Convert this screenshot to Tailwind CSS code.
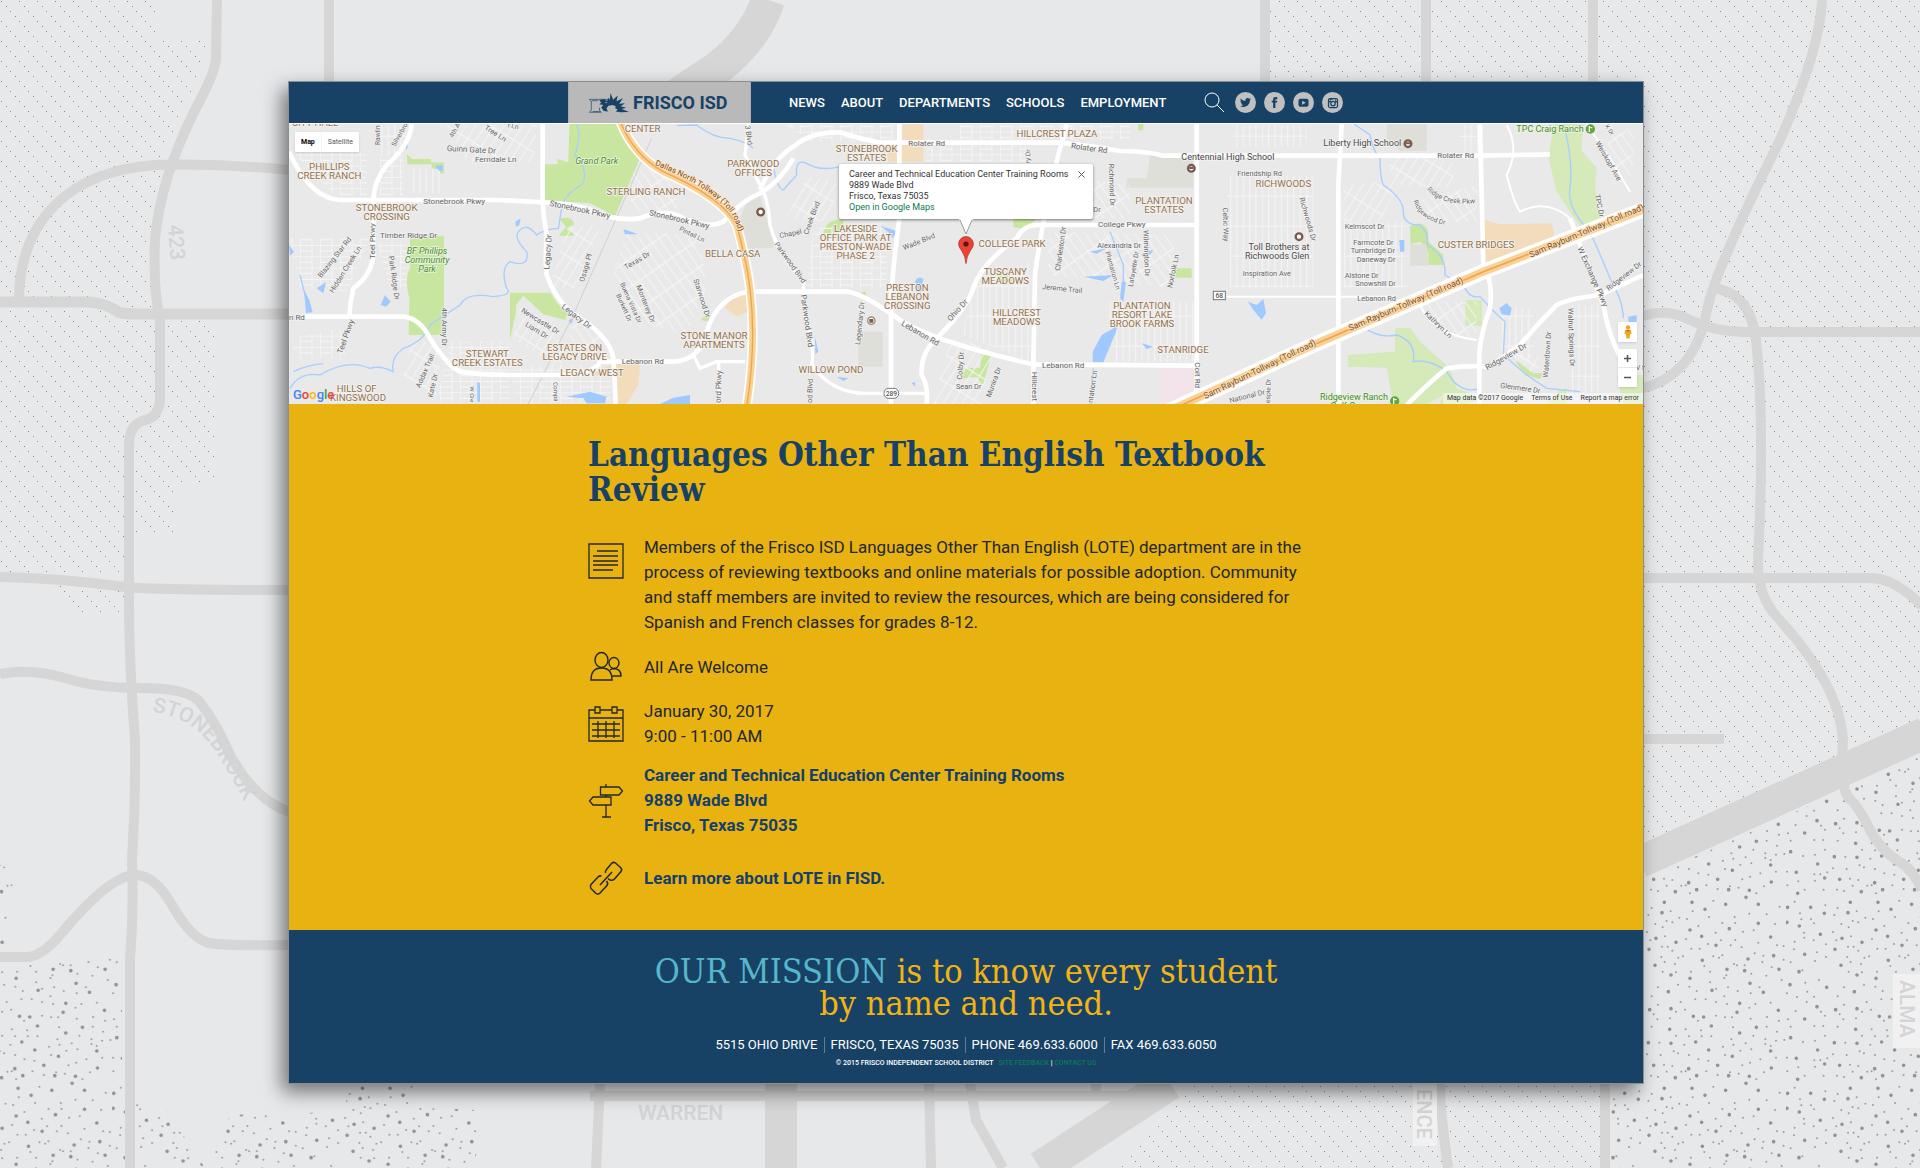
<!DOCTYPE html>
<html lang="en">
<head>
    <meta charset="UTF-8">
    <meta name="viewport" content="width=device-width, initial-scale=1.0">
    <title>Languages Other Than English Textbook Review | Frisco ISD</title>
    <script src="https://cdn.jsdelivr.net/npm/@tailwindcss/browser@4"></script>
</head>
<body class="relative min-h-screen overflow-x-hidden bg-[#e7e8ea] pt-[81px] pr-[276px] pb-[84px] pl-72 font-['Roboto',sans-serif]">

    <!-- Backdrop: faint road map -->
    <svg class="absolute inset-0 h-full w-full" viewBox="0 0 1920 1168" preserveAspectRatio="xMidYMid slice" aria-hidden="true">
        <defs>
            <pattern id="hatch" width="18" height="20" patternUnits="userSpaceOnUse">
                <path d="M1 1.500h1M6 6.500h1M10 11.500h1M15 16.500h1" stroke="#88888a" stroke-width="1" />
            </pattern>
            <pattern id="speckle" width="558" height="558" patternUnits="userSpaceOnUse" patternTransform="translate(1600 900) scale(.3333)">
                <path id="bigDots" fill="none" stroke="#929294" stroke-width="11" stroke-linecap="round" />
                <path id="smallDots" fill="none" stroke="#9c9c9e" stroke-width="6" stroke-linecap="round" />
            </pattern>
        </defs>
        <g fill="url(#hatch)">
            <path d="M0 0H155V38H210L200 75L165 150L152 230V310L0 300Z" />
            <path d="M0 305L110 310L160 320H215V485H175V535H125V572H0Z" />
            <path d="M57 584L125 588V612H70Z" />
            <path d="M1270 0H1422V82H1270ZM1430 0H1500L1498 18H1458V82H1430Z" />
            <path d="M1458 18H1500V0H1920V725L1643 848V82H1458Z" />
            <path d="M1195 1083H1601V1168H1120Z" />
        </g>
        <g fill="url(#speckle)">
            <path d="M0 865L14 870L6 950H0ZM0 966L122 958V1095L165 1108L205 1168H0Z" />
            <path d="M208 1168L230 1115L345 1112L348 1083H420L425 1108L480 1110L475 1168Z" />
            <path d="M1643 880L1920 756V1168H1611V1083H1643Z" />
        </g>
        <g fill="none" stroke="#d6d6d6" stroke-width="10">
            <path d="M217 0L216 60Q214 75 195 110Q160 180 155 240Q153 290 160 320V400Q158 418 145 420Q129 424 129 445V600Q129 660 135 740Q136 800 132 860Q134 910 130 960V1168" />
            <path d="M329 0V82M1265 0V82M1426 0V82M1593 0V82" />
            <path d="M0 302H90Q108 304 118 312Q122 314 140 314H289" stroke-width="11" />
            <path d="M289 170Q220 163 155 165Q90 170 55 205Q20 240 19 298" />
            <path d="M768 0Q755 40 715 70L670 100" stroke-width="34" />
            <path d="M0 577Q60 578 125 587Q160 590 289 590" />
            <path d="M0 674Q30 668 65 678Q95 688 140 688Q185 688 198 700Q215 720 230 755Q255 800 289 812" />
            <path d="M0 957H28Q42 956 60 935Q110 875 135 875Q155 875 172 905Q192 940 210 943Q225 946 289 945" />
            <path d="M590 1096H1140M600 1083L596 1168M929 1083L931 1168M970 1083L976 1120L1003 1168M1096 1083V1100" />
            <path d="M781 1083V1168" stroke-width="32" />
            <path d="M1170 1083L1040 1168" stroke-width="34" />
            <path d="M1440 1083Q1440 1110 1448 1168M1605 1083V1168" />
            <path d="M1822 0Q1820 50 1780 140Q1715 270 1707 310Q1695 375 1643 388" />
            <path d="M1643 316Q1668 308 1690 320Q1715 332 1745 332H1920" />
            <path d="M1710 288Q1750 290 1756 340Q1765 420 1758 560Q1757 595 1777 617Q1840 685 1843 740Q1840 785 1848 797Q1860 808 1870 830Q1882 852 1900 862Q1915 872 1922 890" />
            <path d="M1643 578H1870Q1895 578 1922 606M1643 739H1724" />
            <path d="M1640 862L1925 733" stroke-width="32" />
        </g>
        <path d="M1893 974H1922V1048H1893ZM1413 1080H1437V1146H1413Z" fill="#f1f1f2" />
        <g fill="#d3d4d6" font-size="20" font-weight="500">
            <path id="stonebrookCurve" d="M152 712Q192 716 216 752Q236 784 262 836" fill="none" />
            <text font-size="21"><textPath href="#stonebrookCurve">STONEBROOK</textPath></text>
            <text x="638" y="1120" font-size="21">WARREN</text>
            <text transform="translate(168 225) rotate(86)" font-size="21">423</text>
            <text transform="translate(1900 980) rotate(90)" font-size="21">ALMA</text>
            <text transform="translate(1417 1089) rotate(90)">ENCE</text>
        </g>
    </svg>

    <div class="relative border border-[#8b8f94] bg-[#e8b211] shadow-[-6px_8px_18px_rgba(0,0,0,0.5)]">

        <!-- Header -->
        <header class="flex h-[41px] items-stretch bg-[#184265] pl-[279px]">
            <a href="#" class="flex w-[183px] items-center gap-1 border-x border-[#a9abad] bg-[#b9b9b9] pl-[19px] text-lg font-bold text-[#184265]">
                <svg class="h-5 w-[41px]" viewBox="0 0 124 60" fill="#184265" aria-hidden="true">
                    <path d="M4 19H66M4 19L10 24V52L4 58H40L35 53V44M12 23H30M14 56H36" fill="none" stroke="#184265" stroke-width="2" />
                    <path d="M34 22L48 18L58 24L62 14L66 22L68 0L76 20L90 7L86 25L106 16L94 32L112 31L99 40L116 44L102 48L124 57L98 58L84 56L90 50L82 46L84 40L74 36L62 38L56 46L60 56L48 54L40 44L46 36L34 34L40 29Z" />
                    <path d="M70 38Q66 46 72 56Q62 56 58 46Q62 38 70 38ZM52 27L60 29L53 31Z" fill="#b9b9b9" />
                </svg>
                <span>FRISCO ISD</span>
            </a>
            <nav class="ml-[38px] flex items-center gap-4 text-[13px] font-medium text-white">
                <a href="#">NEWS</a>
                <a href="#">ABOUT</a>
                <a href="#">DEPARTMENTS</a>
                <a href="#">SCHOOLS</a>
                <a href="#">EMPLOYMENT</a>
            </nav>
            <div class="ml-[38px] flex items-center gap-2">
                <button type="button" aria-label="Search" class="mr-[2px]">
                    <svg class="size-[21px]" viewBox="0 0 21 21" fill="none" stroke="#fff" stroke-width="1"><circle cx="8" cy="8" r="7" /><path d="M13 13L20 20" /></svg>
                </button>
                <a href="#" aria-label="Twitter" class="flex size-[21px] items-center justify-center rounded-full bg-[#c0c0c0]">
                    <svg class="size-[11px]" viewBox="0 0 24 24" fill="#184265"><path d="M24 4.6c-.9.4-1.8.7-2.8.8 1-.6 1.8-1.6 2.2-2.7-1 .6-2 1-3.100 1.200A4.900 4.900 0 0 0 11.900 8.400C7.700 8.200 4 6.200 1.700 3.200c-1.300 2.200-.7 5.100 1.500 6.600-.8 0-1.600-.2-2.200-.6 0 2.300 1.600 4.400 3.900 4.900-.7.200-1.500.2-2.200.1.600 1.900 2.400 3.400 4.600 3.400A9.900 9.900 0 0 1 0 19.500a14 14 0 0 0 7.500 2.200c9.100 0 14.300-7.700 14-14.600.9-.7 1.800-1.600 2.500-2.500z" /></svg>
                </a>
                <a href="#" aria-label="Facebook" class="flex size-[21px] items-center justify-center rounded-full bg-[#c0c0c0]">
                    <svg class="size-[11px]" viewBox="0 0 24 24" fill="#184265"><path d="M9 8H6v4h3v12h5V12h3.600l.4-4h-4V6.300c0-.9.200-1.300 1.100-1.300H18V0h-3.800C10.600 0 9 1.600 9 4.600V8z" /></svg>
                </a>
                <a href="#" aria-label="YouTube" class="flex size-[21px] items-center justify-center rounded-full bg-[#c0c0c0]">
                    <svg class="size-[11px]" viewBox="0 0 24 24"><rect x="1" y="4" width="22" height="17" rx="4" fill="#184265" /><path d="M9 8L17 12.500L9 17Z" fill="#c0c0c0" /></svg>
                </a>
                <a href="#" aria-label="Instagram" class="flex size-[21px] items-center justify-center rounded-full bg-[#c0c0c0]">
                    <svg class="size-3" viewBox="0 0 24 24" fill="none" stroke="#184265" stroke-width="2.500"><rect x="3" y="3" width="18" height="18" rx="3" /><path d="M3 9H8M16 9H21M7 3V7M10 3V6" /><circle cx="12" cy="13" r="4.500" /><path d="M16 6H18" /></svg>
                </a>
            </div>
        </header>

        <!-- Map -->
        <section class="relative h-[281px] overflow-hidden border-t border-white bg-[#e9e9e9]" aria-label="Event location">
            <svg class="h-full w-full" viewBox="27 147 4062 840" preserveAspectRatio="xMidYMid slice">
                <defs>
                    <pattern id="blocks" width="60" height="34" patternUnits="userSpaceOnUse">
                        <path d="M0 1H60M0 18H36M1 0V34M36 1V34" fill="none" stroke="#f5f5f5" stroke-width="3" />
                    </pattern>
                    <pattern id="lanes" width="19" height="90" patternUnits="userSpaceOnUse">
                        <path d="M2 0V90M0 4H19" fill="none" stroke="#f5f5f5" stroke-width="3" />
                    </pattern>
                    <pattern id="slant" width="24" height="70" patternUnits="userSpaceOnUse" patternTransform="rotate(32)">
                        <path d="M2 0V70M0 4H24" fill="none" stroke="#f5f5f5" stroke-width="3" />
                    </pattern>
                    <pattern id="slantBack" width="24" height="70" patternUnits="userSpaceOnUse" patternTransform="rotate(-35)">
                        <path d="M2 0V70M0 4H24" fill="none" stroke="#f5f5f5" stroke-width="3" />
                    </pattern>
                </defs>

                <!-- parks, schools, retail -->
                <g fill="#c9e6a0">
                    <path d="M868 147H1018Q1040 210 1082 245L1005 424L930 385L793 376V268H835L830 252L865 262Z" />
                    <path d="M390 482H492V780H386L388 670Q372 610 390 580Z" />
                    <path d="M380 236L396 252H453V262H492V296H480V282H455V268H382Z" />
                    <path d="M690 653H812Q830 690 862 712L856 735L790 718L730 662L708 690V712L690 795Z" />
                    <path d="M838 432Q880 420 882 450L862 458Q885 468 880 482H836L858 456Z" />
                    <path d="M1262 735L1280 718L1300 724L1294 742Z" />
                    <path d="M1630 474Q1640 430 1690 434V455L1670 482ZM2200 432H2270L2230 462L2200 456ZM2048 880L2100 878L2104 836L2134 842L2108 930L2090 905L2050 910ZM2150 600H2190L2200 625H2160ZM2680 580H2735V608H2680ZM2574 147H2590V166H2574ZM1745 650H1758V662H1745Z" />
                    <path d="M3390 455Q3430 430 3445 470V500L3490 540V570H3445V535L3420 500L3392 508Z" />
                    <path d="M3700 850L3760 895H3790L3780 912L3735 900Z" />
                </g>
                <g fill="#d5e9b9">
                    <path d="M3820 147H3910L3904 226L3950 280L3945 340L3966 440L3910 465L3870 410L3830 350L3806 250Z" />
                    <path d="M3204 840L3345 830V760L3390 758L3420 800L3510 880L3530 940L3440 987H3340L3320 878L3204 875Z" />
                    <path d="M3556 676H3606V752H3556ZM3840 945L3860 940V987H3800ZM4010 900H4089V987H4030ZM3500 930L3560 950L3600 975L3560 987H3480Z" />
                </g>
                <g fill="#f2dcbc">
                    <path d="M1868 147H1930V260H1824L1820 200L1866 195ZM1335 700Q1350 660 1405 655V710L1370 724ZM935 900Q1000 850 1080 870L1075 930L1040 987H1010L1000 905Z" />
                    <path d="M3610 434L3660 448L3815 445L3822 470V500L3610 580Z" />
                </g>
                <path d="M1380 440Q1390 370 1440 360L1450 400L1480 500V520H1400ZM1735 770H1808V875H1735ZM2610 240H2740V338H2540V310H2600ZM3320 147H3440V228H3360L3320 190ZM3390 508H3440L3445 572H3390Z" fill="#dfdfda" />
                <path d="M2640 880H2750V950L2700 987H2640Z" fill="#f3e3ea" />

                <!-- minor streets -->
                <path d="M40 230H260V360H160ZM300 250H370V360H300ZM30 490H270L200 650L60 640ZM290 500H380V640H330ZM40 790L180 760L200 850H40ZM510 800H690V980H470ZM700 870H990V985H700ZM1510 147H1840V200H1600ZM1600 460L1820 440V640H1580ZM1940 210H2240V260H1940ZM2040 150H2550V195H2040Z" fill="url(#blocks)" />
                <path d="M300 150H380V245H300ZM385 280H490V355H385ZM2070 640L2250 560V860L2050 780ZM2480 680H2740V860H2500ZM2860 150H3080V215H2860ZM2840 300H3100V640H2850ZM3190 440H3380V640H3190ZM3540 150H3600V230H3540ZM3660 700H3760V860H3660ZM3870 690H3960V950H3870Z" fill="url(#lanes)" />
                <path d="M500 150H770L760 260H560ZM720 700L830 740L850 890L700 790ZM400 780L480 820L470 960L370 900ZM860 460L960 450L900 640H810ZM1580 300L1680 330L1640 440L1520 430ZM2010 790L2140 820L2100 987H1960ZM3330 240L3520 260V340L3330 330ZM3190 330L3360 320L3300 440H3190ZM3680 820L3800 850L3760 900Z" fill="url(#slant)" />
                <path d="M1040 470L1260 480L1280 640L1220 780L1080 740L1000 600ZM880 720L980 800L960 880L870 800ZM1060 290L1140 260L1200 400L1050 410ZM2300 300L2550 330V430H2320ZM2310 470L2680 480V640L2300 600ZM3400 380L3590 330V440L3460 440ZM3430 680L3590 680V790L3480 770ZM3980 190L4060 160V300L4010 300Z" fill="url(#slantBack)" />

                <!-- water -->
                <g fill="none" stroke="#a8ceff" stroke-width="4">
                    <path d="M890 147Q905 180 885 240Q930 290 905 330Q850 360 845 400L835 460Q800 460 770 480Q740 440 715 470Q700 490 740 530Q750 580 690 560Q660 580 680 640Q700 660 640 665Q560 650 540 690Q480 730 450 750Q430 800 370 820Q330 850 340 890Q300 870 270 880Q200 850 120 900Q60 890 30 940" />
                    <path d="M1190 152L1250 150Q1300 190 1350 190Q1400 200 1420 220M1480 270Q1490 340 1510 345L1550 300Q1545 250 1580 265Q1620 290 1680 275M40 890Q80 870 130 866M60 600L80 680" />
                    <path d="M3222 147L3270 180Q3280 230 3300 250Q3300 310 3310 330Q3370 370 3370 410Q3370 450 3420 450Q3450 480 3440 510Q3500 540 3495 600Q3530 620 3555 640Q3570 670 3600 665Q3640 710 3675 740L3670 840L3740 900L3800 940L3900 950" />
                    <path d="M3850 147Q3880 250 3870 340Q3860 400 3930 470Q3970 560 3990 610Q4030 680 4030 730M3255 760Q3300 790 3350 780Q3410 800 3400 860Q3450 850 3500 890Q3540 960 3600 940M2490 470L2530 570V640M2440 880L2430 987" />
                </g>
                <g fill="#a0c9ff">
                    <path d="M72 645L88 675L98 712L78 714ZM27 510L42 530L30 542ZM110 640L138 622L130 655ZM302 690L315 660L332 680L318 695ZM372 205L384 210L380 226ZM464 272L488 270V288H478ZM706 440L722 430L718 450L708 455ZM1030 462L1075 478H1035ZM866 736L880 730L874 748ZM592 920L600 925V980H592ZM860 965L930 950L980 965L975 985H920L910 970ZM1180 968L1230 960V987H1140Z" />
                    <path d="M1800 452L1850 468L1838 490L1824 470ZM1905 620Q1915 600 1930 612L1925 650H1910ZM1605 785L1615 830L1606 838ZM1670 905L1705 910L1690 918ZM2430 530L2480 520L2450 536ZM2410 605L2500 600L2470 618ZM2525 620H2538L2530 680L2520 670ZM2465 780L2500 760L2520 720L2508 770L2470 862H2438V830ZM2585 805L2620 815L2600 822ZM2600 530L2620 525L2610 540ZM1895 925L1905 920L1906 935Z" />
                    <path d="M2904 680L2930 690L2950 672L2958 715L2945 734L2920 705ZM3358 495H3373V530H3360ZM3658 700L3680 684L3695 700L3690 722L3665 718ZM4045 725L4070 720V745H4045Z" />
                </g>
                <path d="M1115 190L880 720L745 987" fill="none" stroke="#cfcfcf" stroke-width="3" />

                <!-- arterials -->
                <g fill="none" stroke="#fff" stroke-width="14">
                    <path d="M27 230Q90 370 180 375H660L790 382Q880 385 950 410Q1010 440 1080 430Q1150 400 1200 425Q1280 465 1330 440Q1380 380 1440 355Q1500 320 1540 250" />
                    <path d="M1405 147L1395 240L1440 330Q1465 370 1470 450Q1490 530 1570 620L1575 720Q1605 800 1595 870Q1660 960 1770 955H1940" stroke-width="10" />
                    <path d="M1440 345Q1480 250 1540 215Q1590 170 1680 172Q1750 195 1800 203H2340Q2450 215 2520 228Q2600 228 2650 242H3600L3810 238" />
                    <path d="M395 147Q390 210 320 270Q280 320 280 380V540Q275 600 220 640Q210 680 208 725" />
                    <path d="M65 725H370Q420 730 450 790Q500 870 540 890Q600 900 700 900H860Q950 890 960 860H1180Q1260 855 1280 770Q1310 670 1400 650H1700Q1750 655 1860 735Q1960 800 2260 868L2750 872" />
                    <path d="M788 147V380Q790 430 800 480Q795 560 800 600Q820 660 870 710Q990 780 1000 850Q1005 920 1007 987" />
                    <path d="M1240 840L1260 880L1310 860H1395M1316 862V987" stroke-width="10" />
                    <path d="M1858 147V430Q1835 600 1833 700V987M2360 147L2335 240Q2285 440 2265 600L2260 870V987M2750 147V987" />
                    <path d="M2750 450H2270Q2230 450 2210 490Q2100 570 2080 640Q2060 700 1980 780Q1920 830 1925 900Q1945 930 1940 987" />
                    <path d="M3185 147L3175 330V987M3600 147L3610 570Q3640 620 3630 700Q3600 780 3598 840V987" />
                    <path d="M4089 600L3960 660Q3870 670 3830 690Q3770 750 3720 810L3630 875Q3560 870 3500 880Q3450 920 3380 990M3870 430L3920 560L3970 690Q3990 800 4030 860" />
                    <path d="M3680 150Q3720 220 3680 300Q3700 380 3720 410Q3800 370 3870 430M3420 690Q3460 780 3590 795M2840 665H3350M3920 147L3990 250L4050 350" stroke-width="6" />
                </g>

                <!-- toll roads -->
                <g fill="none">
                    <path d="M1020 137Q1060 240 1150 290Q1330 370 1370 450Q1400 560 1410 640Q1430 800 1400 997" stroke="#fff" stroke-width="30" />
                    <path d="M1020 137Q1060 240 1150 290Q1330 370 1370 450Q1400 560 1410 640Q1430 800 1400 997" stroke="#fbd193" stroke-width="20" />
                    <path d="M1020 137Q1060 240 1150 290Q1330 370 1370 450Q1400 560 1410 640Q1430 800 1400 997" stroke="#eba552" stroke-width="4" />
                    <path d="M2640 1020L3100 810L3610 590L4100 400" stroke="#fff" stroke-width="46" />
                    <path d="M2640 1020L3100 810L3610 590L4100 400" stroke="#fbd193" stroke-width="24" />
                    <path d="M2640 1020L3100 810L3610 590L4100 400" stroke="#eba552" stroke-width="5" />
                </g>

                <!-- street names -->
                <g fill="#666" stroke="#f4f4f4" stroke-width="4" paint-order="stroke" font-size="24">
                    <text x="500" y="228" transform="rotate(3 500 228)">Guinn Gate Dr</text>
                    <text x="585" y="261">Ferndale Ln</text>
                    <text x="430" y="388">Stonebrook Pkwy</text>
                    <text x="808" y="392" transform="rotate(12 808 392)">Stonebrook Pkwy</text>
                    <text x="1106" y="420" transform="rotate(13 1106 420)">Stonebrook Pkwy</text>
                    <text x="300" y="489">Timber Ridge Dr</text>
                    <text x="27" y="736">n Rd</text>
                    <text x="1025" y="867">Lebanon Rd</text>
                    <text transform="translate(285 552) rotate(-90)">Teel Pkwy</text>
                    <text transform="translate(186 838) rotate(-70)">Teel Pkwy</text>
                    <text transform="translate(124 610) rotate(-52)" font-size="22">Blazing Star Rd</text>
                    <text transform="translate(160 655) rotate(-58)" font-size="22">Hidden Creek Ln</text>
                    <text transform="translate(326 544) rotate(82)" font-size="22">Park Ridge Dr</text>
                    <text transform="translate(486 698) rotate(90)" font-size="22">4th Army Dr</text>
                    <text transform="translate(300 210) rotate(-90)" font-size="20">Rawlin</text>
                    <text transform="translate(345 216) rotate(-60)" font-size="20">Silverbro</text>
                    <text transform="translate(518 190) rotate(-60)" font-size="20">4th A</text>
                    <text transform="translate(612 162) rotate(32)" font-size="22">Tree Ln</text>
                    <text transform="translate(682 156) rotate(12)" font-size="20">t Ln</text>
                    <text transform="translate(808 584) rotate(-86)">Legacy Dr</text>
                    <text transform="translate(843 698) rotate(38)">Legacy Dr</text>
                    <text transform="translate(912 622) rotate(-74)" font-size="22">Osage Pl</text>
                    <text transform="translate(722 710) rotate(32)" font-size="22">Newcastle Dr</text>
                    <text transform="translate(734 752) rotate(32)" font-size="22">Liam Dr</text>
                    <text transform="translate(1038 584) rotate(-30)" font-size="22">Texas Dr</text>
                    <text transform="translate(1196 466) rotate(26)" font-size="20">Pintail Ln</text>
                    <text transform="translate(1240 614) rotate(72)" font-size="22">Starwood Dr</text>
                    <text transform="translate(1068 634) rotate(68)" font-size="22">Monterey Dr</text>
                    <text transform="translate(1020 626) rotate(66)" font-size="20">Buena Vista Dr</text>
                    <text transform="translate(1008 660) rotate(66)" font-size="20">Burkett Dr</text>
                    <text transform="translate(420 940) rotate(-66)" font-size="22">Addax Trail</text>
                    <text transform="translate(458 968) rotate(-78)" font-size="22">Kate Dr</text>
                    <text transform="translate(570 934) rotate(90)" font-size="18">W Cre</text>
                    <text transform="translate(820 922) rotate(88)" font-size="18">Compa</text>
                    <text transform="translate(1322 984) rotate(-88)">ord Pkwy</text>
                    <text transform="translate(1395 152) rotate(82)" font-size="22">3 Blvd</text>
                    <text transform="translate(1500 490) rotate(-12)" font-size="22">Chapel</text>
                    <text transform="translate(1584 480) rotate(-70)" font-size="22">Creek Blvd</text>
                    <text transform="translate(1482 508) rotate(54)" font-size="22">Parkwood Blvd</text>
                    <text transform="translate(1562 660) rotate(82)">Parkwood Blvd</text>
                    <text transform="translate(1596 984) rotate(-88)" font-size="22">od Blvd</text>
                    <text transform="translate(1740 810) rotate(-84)" font-size="22">Legendary Dr</text>
                    <text transform="translate(1872 526) rotate(-22)" font-size="22">Wade Blvd</text>
                    <text transform="translate(1862 750) rotate(30)">Lebanon Rd</text>
                    <text transform="translate(2012 740) rotate(-48)">Ohio Dr</text>
                    <text x="1885" y="212">Rolater Rd</text>
                    <text x="2372" y="220" transform="rotate(8 2372 220)">Rolater Rd</text>
                    <text x="2454" y="456">College Pkwy</text>
                    <text x="2440" y="412" font-size="22">Dr</text>
                    <text transform="translate(2250 265) rotate(-88)" font-size="20">ry Dr</text>
                    <text transform="translate(2486 266) rotate(88)" font-size="22">Richmond Dr</text>
                    <text transform="translate(2340 588) rotate(-82)" font-size="22">Charleston Dr</text>
                    <text x="2452" y="518" font-size="22">Alexandria Dr</text>
                    <text transform="translate(2476 532) rotate(74)" font-size="20">Plantation Ln</text>
                    <text transform="translate(2558 636) rotate(-80)" font-size="20">Lafayette Dr</text>
                    <text transform="translate(2590 466) rotate(88)" font-size="22">Wilmington Dr</text>
                    <text transform="translate(2676 640) rotate(-78)" font-size="22">Norfolk Ln</text>
                    <text x="2286" y="642" transform="rotate(6 2286 642)" font-size="22">Jereme Trail</text>
                    <text x="2286" y="879">Lebanon Rd</text>
                    <text x="2028" y="943" font-size="22">Sean Dr</text>
                    <text transform="translate(2046 914) rotate(-86)" font-size="22">Colby Dr</text>
                    <text transform="translate(2132 968) rotate(-70)" font-size="22">Munira Dr</text>
                    <text transform="translate(2256 890) rotate(90)">Hillcrest</text>
                    <text transform="translate(2438 984) rotate(-82)" font-size="22">ntation Ln</text>
                    <text transform="translate(2744 862) rotate(90)">Coit Rd</text>
                    <text x="2872" y="303" font-size="22">Friendship Rd</text>
                    <text transform="translate(2828 398) rotate(88)" font-size="22">Celtic Way</text>
                    <text transform="translate(3058 370) rotate(74)" font-size="22">Richwoods Dr</text>
                    <text x="2888" y="602" font-size="22">Inspiration Ave</text>
                    <text x="3472" y="250">Rolater Rd</text>
                    <text x="3194" y="462" font-size="22">Kelmscot Dr</text>
                    <text x="3220" y="510" font-size="22">Farmcote Dr</text>
                    <text x="3212" y="535" font-size="22">Turnbridge Dr</text>
                    <text x="3230" y="560" font-size="22">Daneway Dr</text>
                    <text x="3194" y="609" font-size="22">Alstone Dr</text>
                    <text x="3226" y="633" font-size="22">Snowshill Dr</text>
                    <text x="3232" y="679" font-size="22">Lebanon Rd</text>
                    <path id="ridgeCreek" d="M3440 344Q3490 396 3590 384" fill="none" stroke="none" />
                    <text font-size="21"><textPath href="#ridgeCreek">Ridge Creek Pkwy</textPath></text>
                    <path id="ridgewood" d="M3400 378Q3420 440 3510 452" fill="none" stroke="none" />
                    <text font-size="20"><textPath href="#ridgewood">Ridgewood Dr</textPath></text>
                    <text transform="translate(3432 718) rotate(44)" font-size="22">Kathryn Ln</text>
                    <text transform="translate(3622 886) rotate(-30)">Ridgeview Dr</text>
                    <text transform="translate(3986 648) rotate(-38)" font-size="22">Ridgeview Dr</text>
                    <text transform="translate(3892 520) rotate(66)">W Exchange Pkwy</text>
                    <text transform="translate(3946 204) rotate(60)" font-size="22">Weiskopf Ave</text>
                    <text transform="translate(3944 360) rotate(78)" font-size="22">TPC Dr</text>
                    <text transform="translate(3974 154) rotate(55)" font-size="18">K Dr</text>
                    <text transform="translate(3804 908) rotate(-86)" font-size="22">Waterdown Dr</text>
                    <text transform="translate(3864 700) rotate(88)" font-size="22">Walnut Springs Dr</text>
                    <text transform="translate(3660 938) rotate(8)" font-size="22">Glenmere Dr</text>
                    <text transform="translate(2850 984) rotate(-14)" font-size="22">National Dr</text>
                    <text transform="translate(2970 984) rotate(-88)" font-size="20">espie Dr</text>
                    <text x="4068" y="884" font-size="20">V I</text>
                </g>
                <g fill="#7b4a1c" stroke="#fbe3bf" stroke-width="5" paint-order="stroke" font-size="24">
                    <path id="dntName" d="M1124 270Q1330 352 1366 440Q1378 470 1386 520" fill="none" stroke="none" />
                    <text><textPath href="#dntName">Dallas North Tollway (Toll road)</textPath></text>
                    <text transform="translate(2776 972) rotate(-26)" font-size="26">Sam Rayburn Tollway (Toll road)</text>
                    <text transform="translate(3210 768) rotate(-23)" font-size="26">Sam Rayburn Tollway (Toll road)</text>
                    <text transform="translate(3752 548) rotate(-23)" font-size="26">Sam Rayburn Tollway (Toll road)</text>
                </g>

                <!-- neighbourhoods -->
                <g fill="#93714d" stroke="#f4f2ef" stroke-width="5" paint-order="stroke" font-size="29" text-anchor="middle">
                    <text x="105" y="154">CITY HALL</text>
                    <text x="148" y="285">PHILLIPS</text><text x="148" y="312">CREEK RANCH</text>
                    <text x="320" y="407">STONEBROOK</text><text x="320" y="434">CROSSING</text>
                    <text x="1088" y="172">CENTER</text>
                    <text x="1098" y="359">STERLING RANCH</text>
                    <text x="1420" y="277">PARKWOOD</text><text x="1420" y="304">OFFICES</text>
                    <text x="1358" y="546">BELLA CASA</text>
                    <text x="1302" y="791">STONE MANOR</text><text x="1302" y="818">APARTMENTS</text>
                    <text x="622" y="845">STEWART</text><text x="622" y="872">CREEK ESTATES</text>
                    <text x="884" y="829">ESTATES ON</text><text x="884" y="856">LEGACY DRIVE</text>
                    <text x="936" y="904">LEGACY WEST</text>
                    <text x="230" y="952">HILLS OF</text><text x="234" y="979">KINGSWOOD</text>
                    <text x="1760" y="231">STONEBROOK</text><text x="1760" y="258">ESTATES</text>
                    <text x="1727" y="470">LAKESIDE</text><text x="1727" y="497">OFFICE PARK AT</text><text x="1727" y="524">PRESTON-WADE</text><text x="1727" y="551">PHASE 2</text>
                    <text x="1882" y="648">PRESTON</text><text x="1882" y="675">LEBANON</text><text x="1882" y="702">CROSSING</text>
                    <text x="1653" y="893">WILLOW POND</text>
                    <text x="2331" y="187">HILLCREST PLAZA</text>
                    <text x="2196" y="516">COLLEGE PARK</text>
                    <text x="2176" y="600">TUSCANY</text><text x="2176" y="627">MEADOWS</text>
                    <text x="2210" y="722">HILLCREST</text><text x="2210" y="749">MEADOWS</text>
                    <text x="2652" y="386">PLANTATION</text><text x="2652" y="413">ESTATES</text>
                    <text x="2586" y="702">PLANTATION</text><text x="2586" y="729">RESORT LAKE</text><text x="2586" y="756">BROOK FARMS</text>
                    <text x="2709" y="834">STANRIDGE</text>
                    <text x="3010" y="335">RICHWOODS</text>
                    <text x="3588" y="518">CUSTER BRIDGES</text>
                </g>
                <g fill="#458a2e" stroke="#eef6e2" stroke-width="4" paint-order="stroke" font-size="27" text-anchor="middle">
                    <g font-style="italic">
                        <text x="950" y="266">Grand Park</text>
                        <text x="441" y="536">BF Phillips</text><text x="441" y="563">Community</text><text x="441" y="590">Park</text>
                    </g>
                    <text x="3810" y="171">TPC Craig Ranch</text>
                    <text x="3222" y="975">Ridgeview Ranch</text><text x="3222" y="1002">Golf Course</text>
                </g>
                <g fill="#4b4b4b" stroke="#f4f4f4" stroke-width="4" paint-order="stroke" font-size="27">
                    <text x="2704" y="256">Centennial High School</text>
                    <text x="3130" y="214">Liberty High School</text>
                    <text x="3088" y="526" text-anchor="end">Toll Brothers at</text><text x="3088" y="553" text-anchor="end">Richwoods Glen</text>
                </g>

                <!-- points of interest -->
                <g fill="#fff" stroke="#7a5a4e" stroke-width="7">
                    <circle cx="1442" cy="411" r="10" /><circle cx="2734" cy="280" r="10" /><circle cx="3384" cy="206" r="10" /><circle cx="3057" cy="485" r="10" />
                    <circle cx="1774" cy="737" r="11" stroke="#9a8b72" stroke-width="4" />
                </g>
                <path d="M1768 732H1780V743H1768ZM2728 276H2740V282H2728ZM3378 202H3390V208H3378Z" fill="#7a5a4e" />
                <g fill="#5fa83a"><circle cx="3931" cy="162" r="14" /><circle cx="3344" cy="978" r="14" /></g>
                <path d="M3928 153V171M3928 155L3937 159M3341 969V987M3341 971L3350 975" stroke="#fff" stroke-width="4" />
                <g fill="#fff" stroke="#777" stroke-width="3">
                    <rect x="1812" y="940" width="44" height="30" rx="14" /><rect x="2800" y="649" width="36" height="25" />
                </g>
                <g fill="#555" font-size="20" font-weight="500" text-anchor="middle"><text x="1834" y="962">289</text><text x="2818" y="669">68</text></g>
            </svg>

            <div class="absolute top-2 left-[6px] flex h-5 items-center rounded-[1px] bg-white text-[7px] shadow">
                <button type="button" class="h-full border-r border-gray-100 px-[6px] font-bold text-black">Map</button>
                <button type="button" class="h-full px-[6px] text-[#565656]">Satellite</button>
            </div>

            <div class="absolute bottom-px left-1 text-[13px] leading-4 font-medium" aria-label="Google"><span class="text-[#4285f4]">G</span><span class="text-[#ea4335]">o</span><span class="text-[#fbbc05]">o</span><span class="text-[#4285f4]">g</span><span class="text-[#34a853]">l</span><span class="text-[#ea4335]">e</span></div>

            <!-- marker and info window -->
            <svg class="absolute top-[112px] left-1/2 h-7 w-4 -translate-x-1/2" viewBox="0 0 16 28" aria-hidden="true">
                <path d="M8 27.500Q7.500 20 3.500 14.500Q.6 11 .6 8A7.400 7.400 0 0 1 15.400 8Q15.400 11 12.500 14.500Q8.500 20 8 27.500Z" fill="#ea4335" stroke="#b8312f" stroke-width=".8" />
                <circle cx="8" cy="8" r="2.600" fill="#5c1410" />
            </svg>
            <div class="absolute top-10 left-1/2 flex w-[254px] -translate-x-1/2 items-start justify-between rounded-[2px] bg-white pt-[5px] pr-2 pb-[6px] pl-[10px] text-[9px] leading-[11px] text-[#333] shadow-[0_1px_3px_rgba(0,0,0,0.5)]">
                <p>Career and Technical Education Center Training Rooms<br>9889 Wade Blvd<br>Frisco, Texas 75035<br><a href="#" class="text-[#0b7a52]">Open in Google Maps</a></p>
                <button type="button" aria-label="Close" class="mt-[2px]">
                    <svg class="size-[7px]" viewBox="0 0 7 7" stroke="#555" stroke-width="1"><path d="M.5 .5L6.500 6.500M6.500 .5L.5 6.500" /></svg>
                </button>
                <svg class="absolute top-full left-1/2 h-4 w-[14px] -translate-x-1/2" viewBox="0 0 14 16" aria-hidden="true"><path d="M0 0H14L7 16Z" fill="#fff" /><path d="M1 1L7 15L13 1" fill="none" stroke="#999" stroke-width="1" /></svg>
            </div>

            <div class="absolute right-[6px] bottom-[17px] flex w-[19px] flex-col gap-[7px]">
                <button type="button" aria-label="Street View" class="flex h-5 items-center justify-center rounded-[1px] bg-white shadow">
                    <svg class="h-[14px] w-2" viewBox="0 0 8 14" fill="#f2a71b"><circle cx="4" cy="2.500" r="2.200" /><path d="M1 5H7L7.500 9H6.200L5.500 13.500H2.500L1.800 9H.5Z" /><path d="M2 5H6L4 7Z" fill="#b9741a" /></svg>
                </button>
                <div class="flex flex-col rounded-[1px] bg-white shadow">
                    <button type="button" aria-label="Zoom in" class="flex h-[19px] items-center justify-center border-b border-gray-200"><svg class="size-[7px]" viewBox="0 0 7 7" stroke="#555" stroke-width="1.500"><path d="M0 3.500H7M3.500 0V7" /></svg></button>
                    <button type="button" aria-label="Zoom out" class="flex h-[19px] items-center justify-center"><svg class="size-[7px]" viewBox="0 0 7 7" stroke="#555" stroke-width="1.500"><path d="M0 3.500H7" /></svg></button>
                </div>
            </div>

            <div class="absolute right-0 bottom-0 flex gap-2 bg-white/50 px-1 text-[7px] leading-[11px] text-[#333]">
                <span>Map data ©2017 Google</span>
                <a href="#">Terms of Use</a>
                <a href="#">Report a map error</a>
            </div>
        </section>

        <!-- Event -->
        <main class="h-[526px] pt-[33px] pl-[299px] text-[#22272e]">
            <h1 class="w-[720px] font-['Roboto_Slab','DejaVu_Serif_Condensed',serif] text-[33px] leading-[35px] font-bold text-[#184265]">Languages Other Than English Textbook Review</h1>

            <ul class="mt-7 w-[760px] text-[17px] leading-[25px]">
                <li class="flex items-start gap-5">
                    <svg class="mt-2 size-9 shrink-0" viewBox="0 0 36 36" fill="none" stroke="#22272e" stroke-width="1.300"><path d="M1 1H35V35H1ZM9 8H30M5 13H30M5 18H30M5 22H30M5 27H25" /></svg>
                    <p>Members of the Frisco ISD Languages Other Than English (LOTE) department are in the<br>process of reviewing textbooks and online materials for possible adoption. Community<br>and staff members are invited to review the resources, which are being considered for<br>Spanish and French classes for grades 8-12.</p>
                </li>
                <li class="mt-[14px] flex items-center gap-5">
                    <svg class="size-9 shrink-0" viewBox="0 0 36 36" fill="none" stroke="#22272e" stroke-width="1.400"><ellipse cx="13.500" cy="11" rx="6.500" ry="7.500" /><ellipse cx="26" cy="14" rx="5" ry="5.500" /><path d="M3 31Q3 19 13.500 19Q24 19 24 31ZM22 21Q24 19.500 26 19.500Q33 20 33 27H24" /></svg>
                    <p>All Are Welcome</p>
                </li>
                <li class="mt-[14px] flex items-center gap-5">
                    <svg class="size-9 shrink-0" viewBox="0 0 36 36" fill="none" stroke="#22272e" stroke-width="1.300"><path d="M7 4H1V35H35V4H29M12 4H24M7 1H12V7H7ZM24 1H29V7H24ZM1 12H35M4 18H32M4 24H32M4 30H32M10 15V32M18 15V32M26 15V32" /></svg>
                    <p>January 30, 2017<br>9:00 - 11:00 AM</p>
                </li>
                <li class="mt-[14px] flex items-center gap-5">
                    <svg class="size-9 shrink-0" viewBox="0 0 36 36" fill="none" stroke="#22272e" stroke-width="1.300"><path d="M18 1V4M18 12V14M18 22V34M14 34H23M12.500 4H31L34.500 8L31 12H12.500ZM23 14H5L1.500 18L5 22H23Z" /></svg>
                    <p><a href="#" class="font-bold text-[#153f6b]">Career and Technical Education Center Training Rooms<br>9889 Wade Blvd<br>Frisco, Texas 75035</a></p>
                </li>
                <li class="mt-[22px] flex items-center gap-5">
                    <svg class="size-9 shrink-0" viewBox="0 0 36 36" fill="none" stroke="#22272e" stroke-width="1.500"><path d="M17.500 13Q17 11 18.500 9.500L23.500 3.500Q25.500 1.500 27.500 3L32.500 7.500Q34.500 9.500 33 11.500L26.500 19Q24.500 21 22 20L20 18.500M13.500 16Q11.500 15.500 10 17L3 24.500Q1.500 26.500 3 28.500L8 33.500Q10 35 12 33L19 25.500Q20.500 23 18.500 21M12 25L24 12" /></svg>
                    <p><a href="#" class="font-bold text-[#153f6b]">Learn more about LOTE in FISD.</a></p>
                </li>
            </ul>
        </main>

        <!-- Footer -->
        <footer class="h-[153px] bg-[#184265] pt-[25px] text-center text-white">
            <p class="font-['Roboto_Slab','DejaVu_Serif_Condensed',serif] text-[34px] leading-[32px] text-[#f2b413]"><span class="text-[#56b7cb]">OUR MISSION</span> is to know every student<br>by name and need.</p>
            <ul class="mt-[18px] flex justify-center divide-x divide-[#5f7f99] text-[13px] leading-4">
                <li class="px-[6px]">5515 OHIO DRIVE</li>
                <li class="px-[6px]">FRISCO, TEXAS 75035</li>
                <li class="px-[6px]">PHONE 469.633.6000</li>
                <li class="px-[6px]">FAX 469.633.6050</li>
            </ul>
            <p class="mt-[5px] text-[7px] leading-[10px] font-medium">© 2015 FRISCO INDEPENDENT SCHOOL DISTRICT &nbsp; <a href="#" class="text-[#0a7a5c]">SITE FEEDBACK</a> | <a href="#" class="text-[#0a7a5c]">CONTACT US</a></p>
        </footer>
    </div>

    <script>
        // Speckle texture, one 558 x 558 tile
        const big = "193,7 276,7 377,13 475,13 5,22 74,22 315,28 186,38 115,40 3,67 475,70 40,78 270,90 388,86 103,103 305,109 512,111 168,115 228,127 348,136 147,148 56,163 521,167 307,181 444,177 165,196 381,208 537,208 434,212 39,215 213,225 270,235 450,250 12,254 122,262 336,271 205,275 490,277 419,310 93,320 213,326 149,329 535,331 411,337 280,349 311,351 56,357 334,378 469,382 209,388 419,399 14,413 287,426 145,428 213,430 326,450 95,450 512,453 397,469 31,475 116,492 161,496 353,496 514,504 266,506 290,527 386,527 448,529 226,533 35,538 438,550";
        const small = "155,24 212,34 278,34 145,45 238,53 200,63 217,67 166,72 261,57 188,82 295,78 340,2 26,5 539,20 448,41 404,51 327,51 367,69 406,69 429,95 347,98 141,96 151,121 195,109 258,117 324,132 392,136 363,121 406,120 475,128 461,91 500,43 525,72 42,40 46,58 75,58 84,70 54,98 55,113 26,125 551,138 531,136 118,16 83,121 120,133 425,142 274,146 299,146 186,140 203,140 217,152 340,169 357,173 367,166 235,173 249,169 184,171 194,186 225,192 313,198 402,192 411,196 434,196 464,160 490,167 487,186 515,202 551,179 14,187 24,148 93,157 87,183 120,171 49,211 188,215 228,217 273,215 330,215 379,226 454,221 499,227 545,240 330,247 373,234 234,254 268,260 174,262 290,273 384,262 348,266 413,273 452,280 479,262 3,280 33,291 58,248 64,275 99,240 84,290 155,289 242,306 286,298 317,298 373,289 348,306 381,312 448,323 466,312 512,308 174,314 255,329 228,335 161,343 172,358 210,355 294,362 348,347 375,352 396,352 452,356 501,351 537,362 6,358 29,333 62,306 105,335 117,347 155,380 257,388 303,391 399,382 500,380 531,395 14,380 85,378 112,378 228,407 267,409 305,409 334,409 394,418 460,407 496,418 553,420 528,422 51,426 117,407 87,422 178,428 253,434 369,440 400,434 421,452 437,430 454,448 496,432 512,438 221,454 234,460 141,463 182,465 267,465 295,478 325,482 375,465 450,488 481,478 528,473 3,473 427,496 192,494 217,498 200,515 244,515 257,514 319,514 390,517 416,521 492,517 4,514 37,502 56,527 85,481 103,481 124,475 87,500 113,527 153,527 174,531 270,538 353,525 469,538";
        const toPath = points => points.split(" ").map(p => "M" + p + "h0").join("");
        document.getElementById("bigDots").setAttribute("d", toPath(big));
        document.getElementById("smallDots").setAttribute("d", toPath(small));
    </script>
</body>
</html>
